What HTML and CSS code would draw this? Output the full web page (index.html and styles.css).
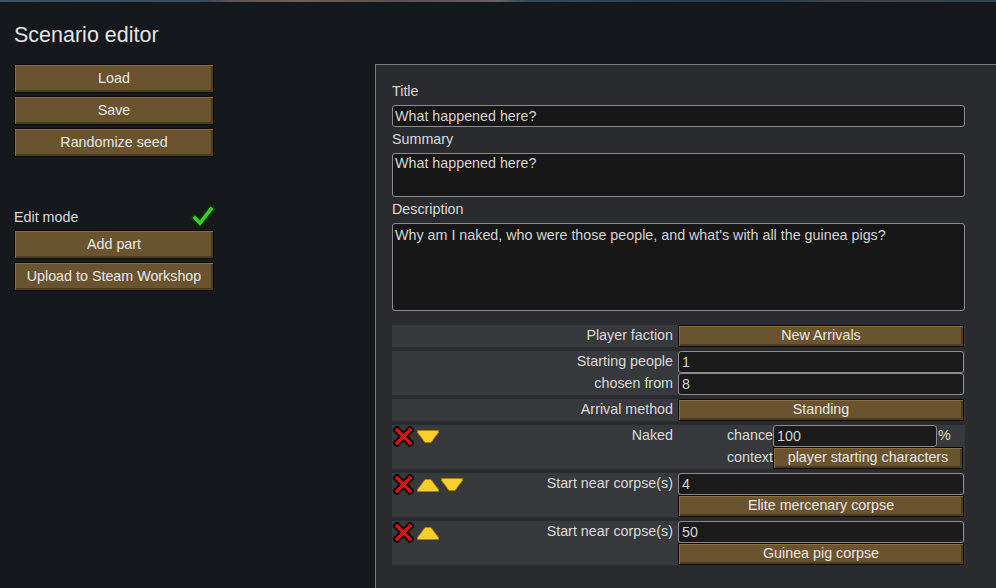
FILE: index.html
```html
<!DOCTYPE html>
<html lang="en">
<head>
    <meta charset="UTF-8">
    <title>Scenario editor</title>
    <link rel="stylesheet" href="styles.css">
</head>
<body>
    <div class="top-strip"></div>

    <h1 class="page-title">Scenario editor</h1>

    <div class="editor">
        <!-- Left column: file actions -->
        <div class="sidebar">
            <div class="btn btn-big">Load</div>
            <div class="btn btn-big">Save</div>
            <div class="btn btn-big">Randomize seed</div>

            <div class="edit-mode">
                <span>Edit mode</span>
                <svg class="check" width="24" height="23" viewBox="0 0 24 23">
                    <polyline points="4,13 9,18 20,4" fill="none" stroke="#0d3a08" stroke-width="6.5" stroke-linecap="square"/>
                    <polyline points="4,13 9,18 20,4" fill="none" stroke="#3ccf1f" stroke-width="3.5" stroke-linecap="square"/>
                </svg>
            </div>
            <div class="btn btn-big">Add part</div>
            <div class="btn btn-big">Upload to Steam Workshop</div>
        </div>

        <!-- Right column: scenario details -->
        <div class="panel">
            <div class="field-title">Title</div>
            <input class="text-input" type="text" value="What happened here?">
            <div class="field-title">Summary</div>
            <textarea class="text-area summary">What happened here?</textarea>
            <div class="field-title">Description</div>
            <textarea class="text-area description">Why am I naked, who were those people, and what's with all the guinea pigs?</textarea>

            <div class="parts">
                <div class="part">
                    <div class="part-line">
                        <div class="part-label"><span class="label-text">Player faction</span></div>
                        <div class="part-value"><div class="btn">New Arrivals</div></div>
                    </div>
                </div>

                <div class="part">
                    <div class="part-line">
                        <div class="part-label"><span class="label-text">Starting people</span></div>
                        <div class="part-value"><input class="row-input" type="text" value="1"></div>
                    </div>
                    <div class="part-line">
                        <div class="part-label"><span class="label-text">chosen from</span></div>
                        <div class="part-value"><input class="row-input" type="text" value="8"></div>
                    </div>
                </div>

                <div class="part">
                    <div class="part-line">
                        <div class="part-label"><span class="label-text">Arrival method</span></div>
                        <div class="part-value"><div class="btn">Standing</div></div>
                    </div>
                </div>

                <div class="part">
                    <div class="part-line">
                        <div class="part-label">
                            <div class="part-icons">
                                <svg class="icon-x" width="21" height="21" viewBox="0 0 21 21">
                                    <path d="M4 4 L17 17 M17 4 L4 17" stroke="#000" stroke-width="7" stroke-linecap="square"/>
                                    <path d="M4 4 L17 17 M17 4 L4 17" stroke="#dc1212" stroke-width="3.5" stroke-linecap="square"/>
                                </svg>
                                <svg class="icon-arrow" width="22" height="14" viewBox="0 0 22 14">
                                    <polygon points="0.5,0.5 21.5,0.5 21.5,2.5 14,12.5 8,12.5 0.5,2.5" fill="#f8cf2c" stroke="#a87b0c" stroke-width="1"/>
                                </svg>
                            </div>
                            <span class="label-text">Naked</span>
                        </div>
                        <div class="part-value sub">
                            <span class="sub-label">chance</span>
                            <div class="pct">
                                <input class="row-input" type="text" value="100">
                                <span class="pct-sign">%</span>
                            </div>
                        </div>
                    </div>
                    <div class="part-line">
                        <div class="part-label"></div>
                        <div class="part-value sub">
                            <span class="sub-label">context</span>
                            <div class="btn btn-ctx">player starting characters</div>
                        </div>
                    </div>
                </div>

                <div class="part">
                    <div class="part-line">
                        <div class="part-label">
                            <div class="part-icons">
                                <svg class="icon-x" width="21" height="21" viewBox="0 0 21 21">
                                    <path d="M4 4 L17 17 M17 4 L4 17" stroke="#000" stroke-width="7" stroke-linecap="square"/>
                                    <path d="M4 4 L17 17 M17 4 L4 17" stroke="#dc1212" stroke-width="3.5" stroke-linecap="square"/>
                                </svg>
                                <svg class="icon-arrow" width="22" height="14" viewBox="0 0 22 14">
                                    <polygon points="0.5,13.5 21.5,13.5 21.5,11.5 14,1.5 8,1.5 0.5,11.5" fill="#f8cf2c" stroke="#a87b0c" stroke-width="1"/>
                                </svg>
                                <svg class="icon-arrow" width="22" height="14" viewBox="0 0 22 14">
                                    <polygon points="0.5,0.5 21.5,0.5 21.5,2.5 14,12.5 8,12.5 0.5,2.5" fill="#f8cf2c" stroke="#a87b0c" stroke-width="1"/>
                                </svg>
                            </div>
                            <span class="label-text">Start near corpse(s)</span>
                        </div>
                        <div class="part-value"><input class="row-input" type="text" value="4"></div>
                    </div>
                    <div class="part-line">
                        <div class="part-label"></div>
                        <div class="part-value"><div class="btn">Elite mercenary corpse</div></div>
                    </div>
                </div>

                <div class="part">
                    <div class="part-line">
                        <div class="part-label">
                            <div class="part-icons">
                                <svg class="icon-x" width="21" height="21" viewBox="0 0 21 21">
                                    <path d="M4 4 L17 17 M17 4 L4 17" stroke="#000" stroke-width="7" stroke-linecap="square"/>
                                    <path d="M4 4 L17 17 M17 4 L4 17" stroke="#dc1212" stroke-width="3.5" stroke-linecap="square"/>
                                </svg>
                                <svg class="icon-arrow" width="22" height="14" viewBox="0 0 22 14">
                                    <polygon points="0.5,13.5 21.5,13.5 21.5,11.5 14,1.5 8,1.5 0.5,11.5" fill="#f8cf2c" stroke="#a87b0c" stroke-width="1"/>
                                </svg>
                            </div>
                            <span class="label-text">Start near corpse(s)</span>
                        </div>
                        <div class="part-value"><input class="row-input" type="text" value="50"></div>
                    </div>
                    <div class="part-line">
                        <div class="part-label"></div>
                        <div class="part-value"><div class="btn">Guinea pig corpse</div></div>
                    </div>
                </div>
            </div>
        </div>
    </div>
</body>
</html>
```

FILE: styles.css
```css
:root {
    --bg: #15181c;
    --panel: #2a2b2e;
    --row: #38393c;
    --field: #171717;
    --field-border: #8c8c8c;
    --brown: #6a532f;
    --text: #dadada;
}

* {
    margin: 0;
    padding: 0;
    box-sizing: border-box;
}

html, body {
    height: 100%;
}

body {
    font-family: 'Liberation Sans', Arial, sans-serif;
    font-size: 14.3px;
    background: var(--bg);
    color: var(--text);
    overflow: hidden;
}

/* Strip of the game world peeking through at the top */
.top-strip {
    height: 2px;
    background: linear-gradient(90deg, #3e5064 0%, #3a4d60 21%, #5b554f 23%, #6e6058 30%, #55524f 40%, #66615f 50%, #34495c 53%, #26384a 75%, #3e434b 85%, #34414e 100%);
}

.page-title {
    font-size: 21.5px;
    font-weight: normal;
    line-height: 24px;
    color: #e4e4e4;
    margin: 21px 0 0 14px;
}

.editor {
    display: grid;
    grid-template-columns: 200px 1fr;
    column-gap: 161px;
    padding-left: 14px;
    margin-top: 17px;
}

/* Buttons */
.btn {
    display: flex;
    align-items: center;
    justify-content: center;
    height: 22px;
    padding-bottom: 2px;
    background: var(--brown);
    border: 1px solid #0e0c09;
    box-shadow: inset 1px 1px 0 #8a6d40, inset -2px -2px 0 #4d3c21;
    color: #e8e8e8;
    white-space: nowrap;
}

.btn-big {
    height: 29px;
    margin-bottom: 3px;
}

.sidebar {
    display: flex;
    flex-direction: column;
}

.edit-mode {
    display: flex;
    align-items: center;
    justify-content: space-between;
    height: 24px;
    margin-top: 45px;
    margin-bottom: 1px;
    padding-bottom: 1px;
}

.check {
    margin: 0 -1px 0 0;
}

/* Panel */
.panel {
    background: var(--panel);
    border-top: 1px solid #7a7a7a;
    border-left: 1px solid #7a7a7a;
    min-height: calc(100vh - 64px);
    padding: 15px 31px 0 16px;
    display: flex;
    flex-direction: column;
}

.field-title {
    line-height: 22px;
    height: 24px;
    margin-bottom: 1px;
}

.text-input,
.text-area,
.row-input {
    font-family: inherit;
    font-size: 14.3px;
    color: #d4d4d4;
    background: var(--field);
    border: 1px solid var(--field-border);
    border-radius: 3px;
    outline: none;
    width: 100%;
}

.text-input {
    height: 22px;
    padding: 0 2px 1px;
    margin-bottom: 1px;
}

.text-area {
    resize: none;
    padding: 1px 2px;
    line-height: 16px;
    margin-bottom: 1px;
}

.summary {
    height: 44px;
}

.description {
    height: 88px;
    padding-top: 3px;
}

/* Scenario parts */
.parts {
    display: flex;
    flex-direction: column;
    gap: 4px;
    margin-top: 13px;
}

.part {
    background: var(--row);
}

.part-line {
    display: grid;
    grid-template-columns: 286px 1fr;
    height: 22px;
}

.part-label {
    display: flex;
    justify-content: space-between;
    align-items: flex-start;
    padding-right: 5px;
}

.label-text {
    margin-left: auto;
    line-height: 20px;
}

.part-icons {
    display: flex;
    align-items: flex-start;
    padding: 1px 0 0 1px;
}

.icon-arrow {
    margin: 4px 0 0 2px;
}

.icon-x + .icon-arrow {
    margin-left: 3px;
}

.part-value {
    padding-right: 1px;
}

.row-input {
    height: 22px;
    padding: 0 3px 1px;
    background: #1b1b1b;
}

.part-value.sub {
    display: grid;
    grid-template-columns: 95px 1fr;
}

.sub-label {
    text-align: right;
    line-height: 20px;
}

.pct {
    display: flex;
}

.pct .row-input {
    width: 164px;
}

.pct-sign {
    line-height: 20px;
    padding-left: 1px;
}

.btn-ctx {
    margin-right: 1px;
}
```
